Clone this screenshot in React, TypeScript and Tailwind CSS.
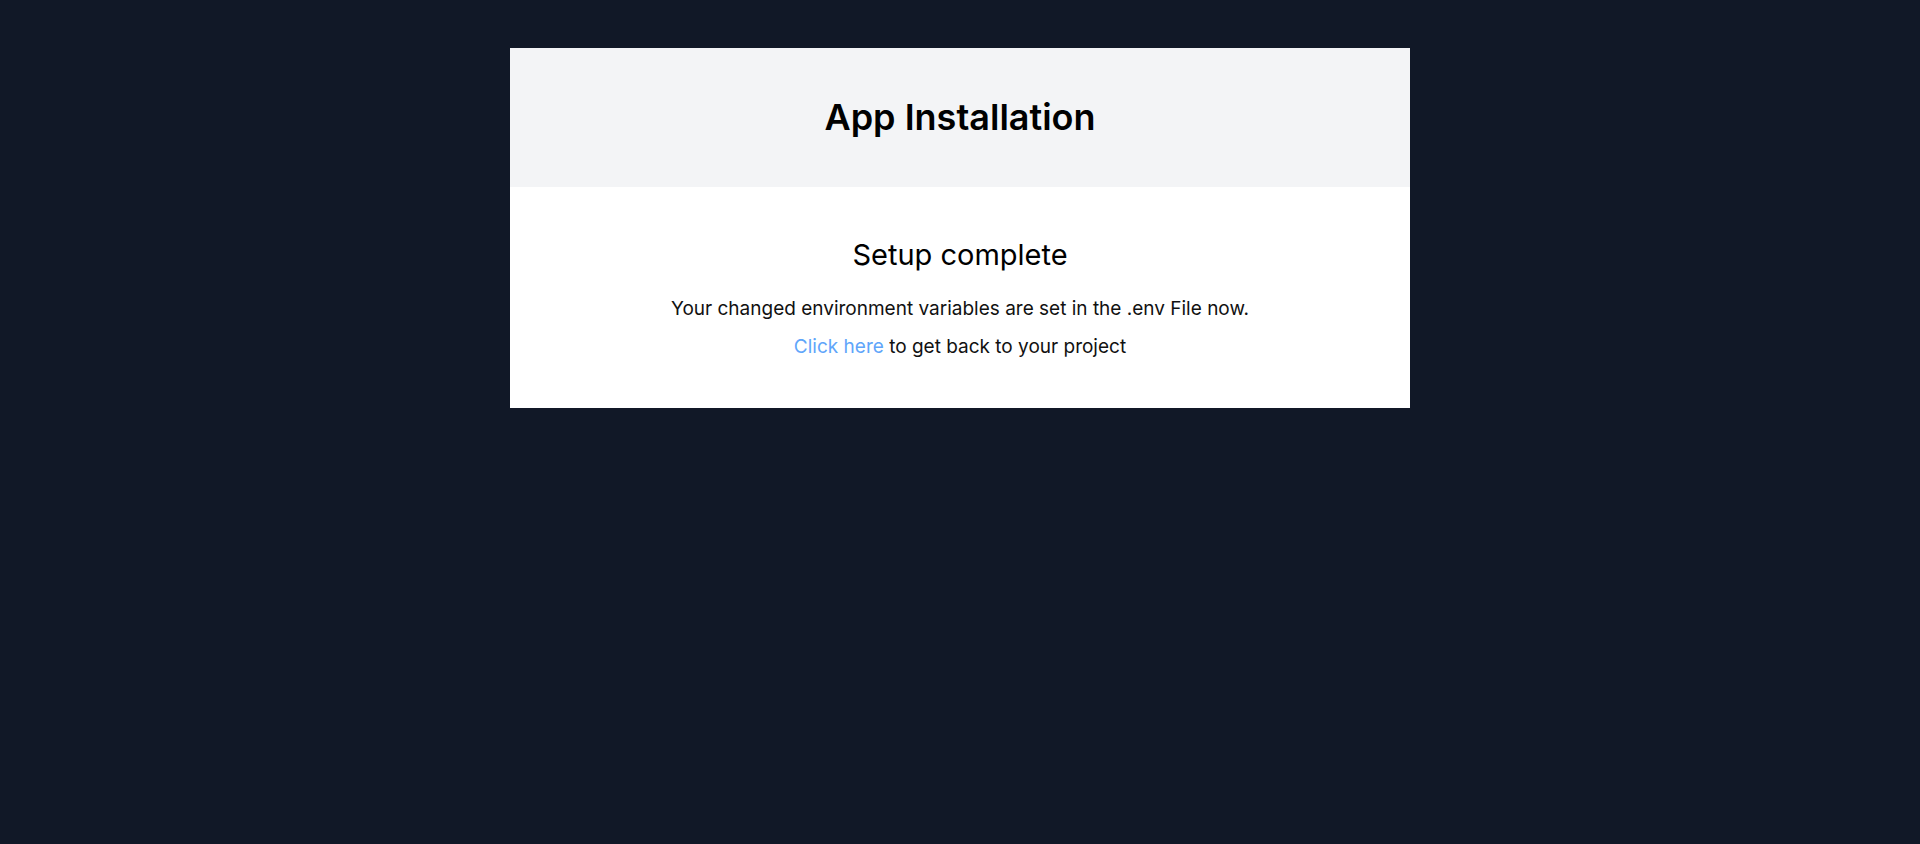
import React from 'react';

const App = () => {
  return (
    <div className="min-h-screen bg-[#111827] pt-12" style={{ fontFamily: 'Inter, "Noto Sans", sans-serif' }}>
      <div className="mx-auto max-w-[900px] bg-white">
        <div className="bg-gray-100 pt-[49px] pb-[50px] text-center">
          <h1 className="text-4xl font-semibold text-black">App Installation</h1>
        </div>
        <div className="px-8 pt-[50px] pb-[47px] text-center text-black">
          <h2 className="text-[29px] leading-9">Setup complete</h2>
          <p className="mt-[22px] text-[19px] leading-7 text-[#111]">
            Your changed environment variables are set in the .env File now.
          </p>
          <p className="mt-[10px] text-[19px] leading-7 text-[#111]">
            <a href="#" className="text-[#60a5fa]">Click here</a> to get back to your project
          </p>
        </div>
      </div>
    </div>
  );
};

export default App;
